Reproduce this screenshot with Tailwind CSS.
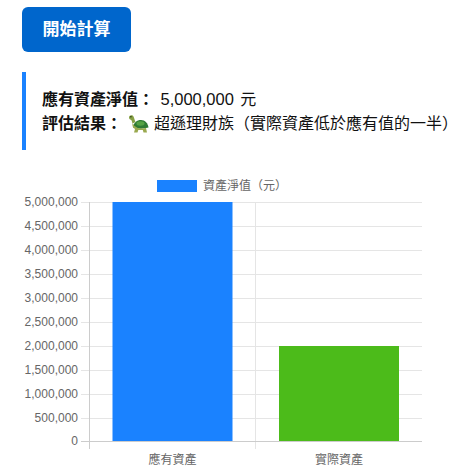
<!DOCTYPE html>
<html lang="zh-Hant">
<head>
    <meta charset="UTF-8">
    <title>開始計算</title>
    <script src="https://cdn.jsdelivr.net/npm/@tailwindcss/browser@4"></script>
</head>
<body class="bg-white overflow-hidden font-[family-name:'Liberation_Sans','Noto_Sans_CJK_TC',sans-serif] text-[#111]">
    <div class="pl-[22px] pt-[7px]">
        <button class="w-[109px] h-[45px] rounded-[6px] bg-[#0066cc] text-white text-[17px] font-bold">開始計算</button>

        <!-- result box -->
        <div class="mt-[20px] h-[78px] border-l-4 border-[#1a82ff] pl-[16px] flex flex-col justify-center text-[16px] leading-[24px] whitespace-nowrap">
            <p><span class="font-bold">應有資產淨值：</span> <span class="text-[16.5px] mx-[2px]">5,000,000</span> 元</p>
            <p class="flex items-center">
                <span class="font-bold">評估結果：</span>
                <svg class="ml-[6px] mr-[5px]" width="21" height="20" viewBox="0 0 21 20">
                    <path d="M1 3.500C1 1.200 4.500 .5 5.500 2.500c.8 1.600 1 3.500 2 5.500L4.500 9.500C4 7.500 3.800 6.500 2.800 5.800 1.800 5.300 1 4.700 1 3.500z" fill="#86a044"/>
                    <path d="M5 13.500C5.500 8.500 9 6 13 6s7 3.500 7.500 7.500c-5 1.500-10.500 1.500-15.500 0z" fill="#2f7a34"/>
                    <ellipse cx="12.500" cy="9.500" rx="4" ry="2.200" fill="#55a244"/>
                    <path d="M4.500 9c-.5 3 .5 5 2.500 6l-1 3.500h3.500l.8-2.500h4.500l.7 2.500h3.500l-1-4.500c-4.500 1-10.500 1-13.500-5z" fill="#9aa94f"/>
                    <circle cx="2.900" cy="2.800" r=".7" fill="#1c2a10"/>
                </svg>
                <span>超遜理財族（實際資產低於應有值的一半）</span>
            </p>
        </div>
    </div>

    <!-- chart -->
    <svg class="mt-[20px] block" width="476" height="326" viewBox="0 170 476 326" font-size="12" fill="#666">
        <rect x="157" y="180" width="40" height="12" fill="#1a82ff"/>
        <text x="203" y="190">資產淨值（元）</text>

        <g stroke="#e5e5e5">
            <path d="M81 202.500H422M81 226.500H422M81 250.500H422M81 274.500H422M81 298.500H422M81 322.500H422M81 346.500H422M81 370.500H422M81 394.500H422M81 418.500H422"/>
            <path d="M255.500 202V449"/>
        </g>
        <path d="M89.500 202V449M81 441.500H422" stroke="#ccc"/>

        <rect x="112.500" y="202" width="120" height="239" fill="#1a82ff"/>
        <rect x="279" y="346" width="120" height="95" fill="#4cbb1a"/>

        <g text-anchor="end">
            <text x="78" y="206">5,000,000</text>
            <text x="78" y="230">4,500,000</text>
            <text x="78" y="254">4,000,000</text>
            <text x="78" y="278">3,500,000</text>
            <text x="78" y="302">3,000,000</text>
            <text x="78" y="326">2,500,000</text>
            <text x="78" y="350">2,000,000</text>
            <text x="78" y="374">1,500,000</text>
            <text x="78" y="398">1,000,000</text>
            <text x="78" y="422">500,000</text>
            <text x="78" y="445">0</text>
        </g>
        <g text-anchor="middle">
            <text x="172.500" y="464">應有資產</text>
            <text x="339" y="464">實際資產</text>
        </g>
    </svg>
</body>
</html>
